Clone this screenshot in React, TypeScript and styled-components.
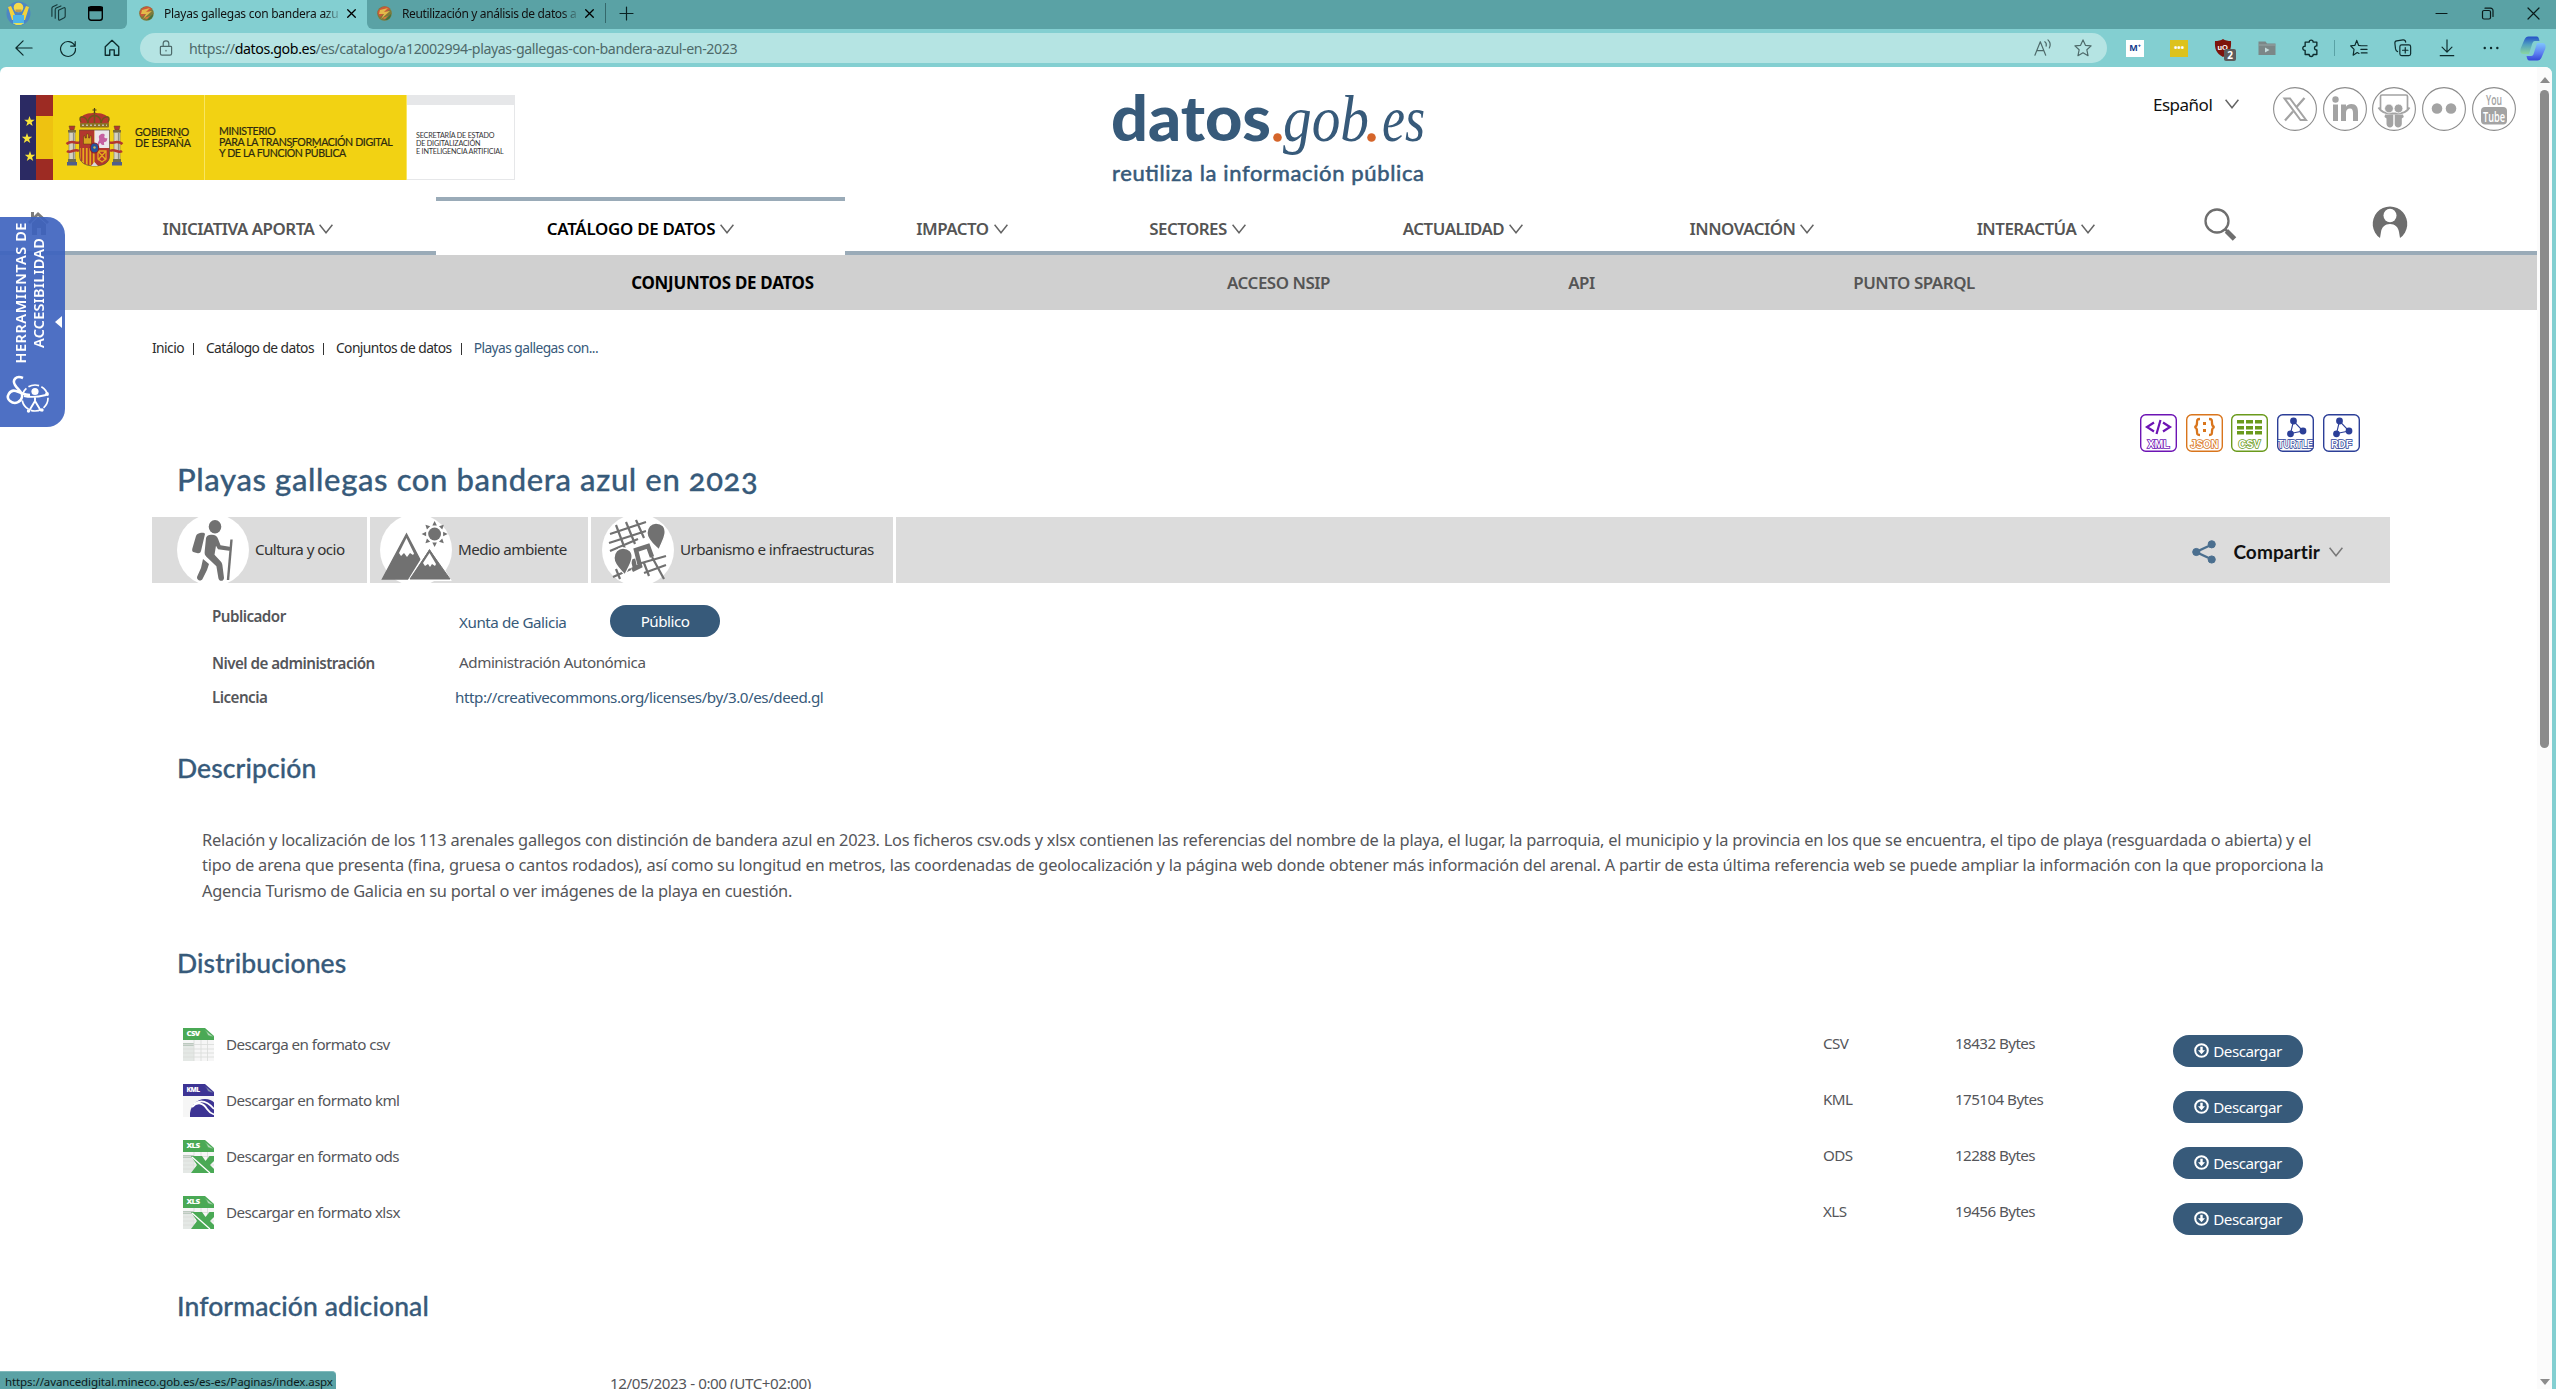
import React from "react";
import styled, { createGlobalStyle } from "styled-components";

const SANS = `"Noto Sans", "Open Sans", sans-serif`;
const GEO = `Lato, "Noto Sans", sans-serif`;
const BLUE = "#375a7a";
const TEAL = "#5aa2a5";
const LINE = "#9aabb8";

const Global = createGlobalStyle`
  * { box-sizing: border-box; }
  html, body { margin: 0; padding: 0; overflow: hidden; background: #83cfd1; }
  svg { display: block; flex: none; overflow: visible; }
`;

const Window = styled.div`
  display: flex;
  flex-direction: column;
  width: 2556px;
  height: 1389px;
  overflow: hidden;
  position: relative;
  background: #83cfd1;
  font-family: ${SANS};
  color: #55565a;
  white-space: nowrap;
`;

/* ---------- browser chrome ---------- */

const TabStrip = styled.div`
  display: flex;
  height: 29px;
  background: ${TEAL};
  color: #111;
  align-items: stretch;
`;

const StripTools = styled.div`
  width: 127px;
  background: ${TEAL};
  border-bottom-right-radius: 6px;
  display: flex;
  align-items: center;
  padding: 0 0 3px 6px;
  gap: 19px;
`;

const TabHolder = styled.div`
  background: #83cfd1;
  display: flex;
  flex: none;
  border-radius: 6px 6px 0 0;
`;

const Tab = styled.div<{ $w: number; $active?: boolean }>`
  width: ${(p) => p.$w}px;
  height: 29px;
  display: flex;
  align-items: center;
  padding: 0 10px 3px ${(p) => (p.$active ? 12 : 10)}px;
  background: ${(p) => (p.$active ? "#83cfd1" : TEAL)};
  border-bottom-left-radius: ${(p) => (p.$active ? 0 : 6)}px;
`;

const TabTitle = styled.span<{ $ls: number }>`
  flex: none;
  width: 174px;
  margin-left: 10px;
  margin-right: 9px;
  font-size: 12px;
  letter-spacing: ${(p) => p.$ls}px;
  mask-image: linear-gradient(to right, #000 92%, rgba(0, 0, 0, 0.25));
`;

const NewTab = styled.div`
  display: flex;
  align-items: center;
  padding-bottom: 3px;
`;

const TabDivider = styled.i`
  width: 1px;
  height: 20px;
  margin: 3px 13px 0 0;
  background: #34686b;
`;

const Spacer = styled.div`
  flex: 1;
`;

const WindowButtons = styled.div`
  display: flex;
  align-items: center;
  gap: 33px;
  padding: 0 16px 3px 0;
`;

const Toolbar = styled.div`
  height: 38px;
  display: flex;
  align-items: center;
  padding: 0 9px 0 15px;
`;

const NavButtons = styled.div`
  display: flex;
  width: 125px;
  gap: 26px;
  align-items: center;
`;

const AddressBar = styled.div`
  width: 1967px;
  height: 30px;
  border-radius: 15px;
  background: #b5e4e3;
  display: flex;
  align-items: center;
  padding: 0 15px 0 18px;
  color: #4e6a6a;
  font-size: 14.2px;
  letter-spacing: -0.4px;
  b { font-weight: 400; color: #000; }
`;

const Url = styled.span`
  margin-left: 15px;
  flex: 1;
`;

const AddressIcons = styled.div`
  display: flex;
  gap: 22px;
`;

const Extensions = styled.div`
  display: flex;
  align-items: center;
  margin-left: 19px;
`;

const IconGroup = styled.div`
  display: flex;
  align-items: center;
  gap: 26px;
`;

const ExtensionTile = styled.div<{ $bg: string; $fg: string }>`
  width: 18px;
  height: 17px;
  background: ${(p) => p.$bg};
  color: ${(p) => p.$fg};
  font: 700 9px/16px ${SANS};
  text-align: center;
`;

const ShieldBox = styled.div`
  position: relative;
  width: 18px;
  height: 18px;
`;

const CountBadge = styled.span`
  position: absolute;
  left: 10px;
  top: 10px;
  width: 12px;
  height: 12px;
  border-radius: 2px;
  background: #5c5c5c;
  color: #fff;
  font: 700 10px/12px ${SANS};
  text-align: center;
`;

const ToolDivider = styled.i`
  width: 1px;
  height: 16px;
  margin: 0 15px 0 14px;
  background: #5aa2a5;
`;

const CopilotSlot = styled.div`
  margin-left: 20px;
`;

/* ---------- page ---------- */

const Viewport = styled.div`
  display: flex;
  width: 2552px;
  height: 1322px;
  background: #fff;
  border-radius: 6px 7px 0 0;
  overflow: hidden;
`;

const Page = styled.div`
  width: 2537px;
  height: 1322px;
  overflow: hidden;
`;

const ScrollTrack = styled.div`
  width: 15px;
  background: #fbfbfb;
  display: flex;
  flex-direction: column;
  align-items: center;
  padding: 10px 0 4px;
`;

const ScrollThumb = styled.div`
  width: 9px;
  height: 658px;
  margin: 7px 0 auto;
  border-radius: 5px;
  background: #8b8b8b;
`;

const Header = styled.header`
  height: 130px;
  display: flex;
  align-items: flex-start;
  padding-left: 20px;
`;

const GovBanner = styled.div`
  display: flex;
  width: 495px;
  height: 85px;
  margin-top: 28px;
  font-family: ${GEO};
  color: #2d2a10;
`;

const GovYellow = styled.div<{ $w: number; $pad: number }>`
  width: ${(p) => p.$w}px;
  background: #f2d213;
  border-right: 1px solid #f8e560;
  display: flex;
  align-items: center;
  padding-left: ${(p) => p.$pad}px;
  gap: 13px;
`;

const GovText = styled.div<{ $ls: number; $top: number }>`
  font-size: 10.6px;
  line-height: 11px;
  letter-spacing: ${(p) => p.$ls}px;
  -webkit-text-stroke: 0.2px #2d2a10;
  padding-top: ${(p) => p.$top}px;
`;

const GovOffice = styled.div`
  width: 108px;
  border: 1px solid #e6e7e9;
  border-left: 0;
  border-top: 10px solid #e6e7e9;
  padding: 27px 0 0 9px;
  font-size: 7.2px;
  line-height: 8px;
  letter-spacing: -0.2px;
  color: #333;
`;

const Brand = styled.div`
  margin: 15px 0 0 594px;
`;

const Language = styled.div`
  margin: 23px 0 0 724px;
  height: 28px;
  display: flex;
  align-items: center;
  gap: 13px;
  font-size: 17px;
  letter-spacing: -0.5px;
  color: #111;
  width: 120px;
`;

const Social = styled.div`
  display: flex;
  gap: 5.7px;
  margin-top: 20px;
`;

const NavBar = styled.nav`
  display: flex;
  height: 58px;
`;

const NavItem = styled.a<{ $w: number; $active?: boolean; $padLeft?: number }>`
  width: ${(p) => p.$w}px;
  height: 58px;
  flex: none;
  display: flex;
  align-items: center;
  justify-content: center;
  gap: 5px;
  padding: 5px 0 0 ${(p) => p.$padLeft || 0}px;
  border-top: 4px solid ${(p) => (p.$active ? LINE : "transparent")};
  border-bottom: 4px solid ${(p) => (p.$active ? "transparent" : LINE)};
  font-size: 16.9px;
  font-weight: 600;
  letter-spacing: ${(p) => (p.$active ? -0.28 : -0.5)}px;
  color: ${(p) => (p.$active ? "#000" : "#555")};
`;

const NavIcon = styled.span<{ $w: number; $lift: number }>`
  width: ${(p) => p.$w}px;
  height: 58px;
  display: flex;
  align-items: center;
  justify-content: center;
  border-bottom: 4px solid ${LINE};
  padding-bottom: ${(p) => p.$lift}px;
`;

const NavRest = styled.span`
  flex: 1;
  border-bottom: 4px solid ${LINE};
`;

const SubNav = styled.nav`
  display: flex;
  height: 55px;
  background: #d0d0d0;
  padding-left: 436px;
`;

const SubItem = styled.a<{ $w: number; $active?: boolean }>`
  width: ${(p) => p.$w}px;
  display: flex;
  align-items: center;
  justify-content: center;
  font-size: 16.9px;
  font-weight: ${(p) => (p.$active ? 700 : 600)};
  letter-spacing: ${(p) => (p.$active ? -0.25 : -0.45)}px;
  color: ${(p) => (p.$active ? "#000" : "#555")};
`;

const Crumbs = styled.div`
  display: flex;
  align-items: center;
  height: 75px;
  padding-left: 152px;
  font-size: 13.8px;
  letter-spacing: -0.56px;
  color: #2b2b2b;
`;

const CrumbBar = styled.i`
  width: 1px;
  height: 12px;
  margin: 2px 11.5px 0 9.5px;
  background: #333;
`;

const CrumbCurrent = styled.span`
  color: ${BLUE};
`;

const Formats = styled.div`
  display: flex;
  gap: 8.8px;
  margin: 29px 177px 0 0;
  justify-content: flex-end;
`;

const Title = styled.h1`
  margin: 0 0 11px 177px;
  height: 54px;
  font: 500 31px/54px ${GEO};
  letter-spacing: 0.63px;
  color: ${BLUE};
  -webkit-text-stroke: 0.3px ${BLUE};
  font-variant-numeric: oldstyle-nums;
`;

const TopicBar = styled.div`
  display: flex;
  width: 2238px;
  height: 66px;
  margin-left: 152px;
  background: #dcdcdc;
  overflow: hidden;
`;

const Topic = styled.div<{ $w: number; $pad: number }>`
  width: ${(p) => p.$w}px;
  padding-left: ${(p) => p.$pad}px;
  border-right: 3px solid #fff;
  display: flex;
  align-items: center;
  gap: 6px;
  font-size: 15.2px;
  letter-spacing: -0.57px;
  color: #333;
`;

const TopicName = styled.span`
  padding-bottom: 2px;
`;

const TopicDisc = styled.span`
  width: 72px;
  height: 72px;
  flex: none;
  border-radius: 50%;
  background: #fff;
  display: flex;
  align-items: center;
  justify-content: center;
`;

const Share = styled.div`
  margin-left: auto;
  padding: 3px 47px 0 0;
  display: flex;
  align-items: center;
  font: 700 19px/24px ${GEO};
  letter-spacing: 0.1px;
  color: #111;
  span { margin: 0 9px 0 17px; }
`;

const Meta = styled.div`
  margin: 17px 0 0 212px;
  font-size: 15.2px;
`;

const MetaRow = styled.div<{ $h: number }>`
  display: flex;
  align-items: center;
  height: ${(p) => p.$h}px;
`;

const MetaLabel = styled.span<{ $w?: number; $up?: number }>`
  width: ${(p) => p.$w || 247}px;
  padding-bottom: ${(p) => p.$up || 0}px;
  font-weight: 600;
  letter-spacing: -0.54px;
`;

const MetaValue = styled.span<{ $link?: boolean; $w?: number; $down?: number; $up?: number }>`
  width: ${(p) => (p.$w ? p.$w + "px" : "auto")};
  padding: ${(p) => p.$down || 0}px 0 ${(p) => p.$up || 0}px;
  letter-spacing: -0.45px;
  color: ${(p) => (p.$link ? BLUE : "#55565a")};
`;

const Pill = styled.span<{ $w: number }>`
  width: ${(p) => p.$w}px;
  height: 32px;
  border-radius: 16px;
  background: ${BLUE};
  color: #fff;
  display: flex;
  align-items: center;
  justify-content: center;
  gap: 4px;
  padding-bottom: 1px;
  font-size: 15.2px;
  letter-spacing: -0.5px;
`;

const Heading = styled.h2<{ $top: number }>`
  margin: ${(p) => p.$top}px 0 0 177px;
  height: 40px;
  font: 500 26.5px/40px ${GEO};
  letter-spacing: 0.1px;
  color: ${BLUE};
  -webkit-text-stroke: 0.3px ${BLUE};
`;

const Paragraph = styled.p`
  margin: 39px 0 0 202px;
  font-size: 16.4px;
  line-height: 25.4px;
  letter-spacing: -0.245px;
  span { display: block; }
`;

const Files = styled.div`
  margin: 33px 0 0 183px;
`;

const FileRow = styled.div`
  display: grid;
  grid-template-columns: 43px 1597px 132px 218px 130px;
  align-items: center;
  height: 56px;
  font-size: 15.2px;
  letter-spacing: -0.57px;
`;

const FileCell = styled.span`
  padding-bottom: 2px;
`;

const FileAction = styled.span`
  padding-top: 14px;
`;

const DateLine = styled.div`
  margin: 45px 0 0 610px;
  font-size: 15.2px;
  line-height: 24px;
  letter-spacing: -0.42px;
`;

/* ---------- overlays ---------- */

const Status = styled.div`
  position: absolute;
  left: 0;
  bottom: 0;
  width: 336px;
  height: 18px;
  border-top-right-radius: 4px;
  background: ${TEAL};
  border-top: 1px solid #7fb9bb;
  padding-left: 5px;
  font-size: 11.5px;
  line-height: 19px;
  letter-spacing: -0.1px;
  color: #0c1a1a;
`;

const Access = styled.aside`
  position: absolute;
  left: 0;
  top: 217px;
  width: 65px;
  height: 210px;
  border-radius: 0 18px 18px 0;
  background: rgba(60, 98, 190, 0.91);
  color: #fff;
  display: flex;
  flex-direction: column;
`;

const AccessText = styled.div`
  height: 152px;
  display: flex;
  padding: 0 0 0 11px;
  align-items: center;
`;

const AccessWord = styled.span<{ $ls: number }>`
  writing-mode: vertical-rl;
  transform: rotate(180deg);
  font-size: 14.5px;
  font-weight: 600;
  line-height: 18px;
  width: 18px;
  letter-spacing: ${(p) => p.$ls}px;
`;

const AccessArrow = styled.i`
  position: absolute;
  left: 55px;
  top: 99px;
  border: 6px solid transparent;
  border-left: 0;
  border-right: 7px solid #fff;
`;

const HomeBehind = styled.div`
  position: absolute;
  left: 28px;
  top: 211px;
`;

/* ---------- drawings ---------- */

const Line = ({ d, size = 20, color = "#0d2b2c", w = 1.3, box = 20, fill = "none" }: {
  d: string; size?: number; color?: string; w?: number; box?: number; fill?: string;
}) => (
  <svg width={size} height={size} viewBox={`0 0 ${box} ${box}`} fill={fill} stroke={color} strokeWidth={w} strokeLinecap="round" strokeLinejoin="round">
    <path d={d} />
  </svg>
);

const Chevron = ({ color = "#666" }: { color?: string }) => (
  <svg width="14" height="10" viewBox="0 0 14 10" fill="none" stroke={color} strokeWidth="1.5">
    <path d="M.6.8 7 8.8 13.4.8" />
  </svg>
);

const Avatar = () => (
  <svg width="25" height="25" viewBox="0 0 25 25">
    <circle cx="12.5" cy="12.5" r="12" fill="#4e86c4" />
    <path d="M2 6l3-1 4 9h7l4-9 3 1-4 13H6z" fill="#f3d23c" />
    <circle cx="12.5" cy="6.5" r="4.8" fill="#f6da4b" />
    <path d="M9.5 8.5h6v2.5h-6z" fill="#b99a52" />
    <path d="M7 14h11v9H7z" fill="#4fb4e8" />
    <path d="M7 22h11l-3 2h-5z" fill="#e8e055" />
  </svg>
);

const Favicon = () => (
  <svg width="15" height="15" viewBox="0 0 15 15">
    <circle cx="7.5" cy="7.5" r="7.3" fill="#7d7a3a" />
    <path d="M1 5C4 0 10-1 13 3L3 11C1 9 0 7 1 5z" fill="#c9593a" />
    <path d="M3 4l8-2-4 4 6-1-9 8 3-5H2z" fill="#e3b94a" />
    <path d="M8 14l6-6c0 4-3 6-6 6z" fill="#3f7340" />
    <path d="M5 12l6-2-3 3z" fill="#e0793a" />
  </svg>
);

const Copilot = () => (
  <svg width="26" height="25" viewBox="0 0 26 25">
    <defs>
      <linearGradient id="cpA" x1="0" y1="0" x2="0" y2="1"><stop stopColor="#2450c8" /><stop offset=".45" stopColor="#4f9fc0" /><stop offset="1" stopColor="#8ad6a0" /></linearGradient>
      <linearGradient id="cpB" x1="0" y1="0" x2="0" y2="1"><stop stopColor="#7fc4ff" /><stop offset=".6" stopColor="#5b7cf0" /><stop offset="1" stopColor="#3546d8" /></linearGradient>
    </defs>
    <path d="M8.500.5h8c2 0 2.500 2 3 4.500L15 5c-2 0-2.800 2-3.500 5L9 18H3.500C0 18 0 15 .8 12L4.500 3.500c1-2 2-3 4-3z" fill="url(#cpA)" />
    <path d="M17.500 24.500h-8c-2 0-2.500-2-3-4.500l4.500 0c2 0 2.800-2 3.500-5L17 7h5.500c3.500 0 3.500 3 2.700 6l-3.700 8.500c-1 2-2 3-4 3z" fill="url(#cpB)" />
  </svg>
);

const star = (cx: number, cy: number, r: number) => {
  const pts: string[] = [];
  for (let i = 0; i < 10; i++) {
    const a = -Math.PI / 2 + (i * Math.PI) / 5;
    const q = i % 2 ? r * 0.4 : r;
    pts.push(`${(cx + q * Math.cos(a)).toFixed(2)},${(cy + q * Math.sin(a)).toFixed(2)}`);
  }
  return pts.join(" ");
};

const FlagStripes = () => (
  <svg width="33" height="85" viewBox="0 0 33 85">
    <rect width="16" height="85" fill="#2b2a63" />
    <rect x="16" width="17" height="85" fill="#9d2b23" />
    <rect x="16" y="21" width="17" height="43" fill="#eec211" />
    <g fill="#f6e23a">
      <polygon points={star(9.5, 26.5, 5.5)} />
      <polygon points={star(7, 43.5, 5.5)} />
      <polygon points={star(10, 61.5, 5.5)} />
    </g>
  </svg>
);

const Pillar = ({ x }: { x: number }) => (
  <g transform={`translate(${x} 0)`}>
    <path d="M2 18h6l-1 4H3z" fill="#b3372e" stroke="#5c4a22" strokeWidth=".5" />
    <rect x="1" y="22" width="8" height="2.5" fill="#7b6a3a" />
    <rect x="2" y="24.5" width="6" height="27" fill="#d6d2bf" stroke="#777" strokeWidth=".6" />
    <path d="M6.500 25v26" stroke="#8d8d84" strokeWidth="1.2" />
    <rect x="1" y="51" width="8" height="3" fill="#6f6d4b" />
    <rect x="0" y="54" width="10" height="3.5" fill="#4f5f8a" />
  </g>
);

const CoatOfArms = () => (
  <svg width="55" height="60" viewBox="0 0 55 60">
    <Pillar x={0} />
    <Pillar x={45} />
    <path d="M-.5 36c6-5 10 1 14-2M0 43c4 3 7-3 12 0M55.500 36c-6-5-10 1-14-2M55 43c-4 3-7-3-12 0" fill="none" stroke="#b3372e" strokeWidth="2.6" />
    <path d="M14 17C10 8 18 5 27.500 5S45 8 41 17z" fill="#b3372e" />
    <path d="M14 14C10 7 19 7 21 15M41 14C45 7 36 7 34 15M27.500 4v11M21 15c0-10 13-10 13 0" fill="none" stroke="#6e561a" strokeWidth="1.5" />
    <path d="M27.500 0v5M25.500 2h4" stroke="#4a3c18" strokeWidth="1.2" />
    <rect x="13" y="15" width="29" height="4.5" rx="1" fill="#8a6f22" />
    <path d="M15 17.200h25" stroke="#d8e0f0" strokeWidth="1" strokeDasharray="2 2" />
    <path d="M12.500 22h15v18h-15z" fill="#b3372e" />
    <path d="M27.500 22h15v18h-15z" fill="#ece6ea" />
    <path d="M12.500 40h15v18C17 58 12.500 54 12.500 48z" fill="#e5a91c" />
    <path d="M27.500 40h15v8c0 6-4.500 10-15 10z" fill="#b3372e" />
    <path d="M14.500 40v13M18 40v16M21.500 40v17M25 40v18" stroke="#b3372e" strokeWidth="1.7" />
    <path d="M16.500 36v-8h1.500v2h1.500v-4h2v4H23v-2h1.500v8z" fill="#d9a51f" stroke="#5c3a10" strokeWidth=".5" />
    <path d="M31 37c-1-3 2-4 1-7s3-5 5-4-1 3 1 4 3-1 2 2-3 1-3 3 1 2-1 2-2-2-3-2 0 2-2 2z" fill="#c560a0" />
    <path d="M31 43h8v8l-4 3-4-3zM31 43l8 9M39 43l-8 9" fill="none" stroke="#e5a91c" strokeWidth="1.3" />
    <ellipse cx="27.5" cy="40" rx="4.2" ry="5" fill="#23539b" stroke="#8e1f2b" strokeWidth="1.2" />
    <circle cx="27.5" cy="39.5" r="1.2" fill="#cbb45c" />
    <path d="M12.500 22h30v26c0 6-5 10-15 10s-15-4-15-10z" fill="none" stroke="#5c4a3a" strokeWidth=".7" />
    <path d="M24 58l3.500-4 3.500 4z" fill="#d9d9d9" />
  </svg>
);

const BrandLogo = () => (
  <svg width="320" height="112" viewBox="0 0 320 112" fill={BLUE}>
    <text x="2" y="59" fontFamily="Lato, sans-serif" fontWeight="900" fontSize="62" textLength="160" lengthAdjust="spacingAndGlyphs">datos</text>
    <circle cx="168.500" cy="55.500" r="4.300" fill="#d5652a" />
    <text x="174" y="59" fontFamily="'Liberation Serif', serif" fontStyle="italic" fontSize="66" textLength="86" lengthAdjust="spacingAndGlyphs">gob</text>
    <circle cx="262.500" cy="55.500" r="4.300" fill="#d5652a" />
    <text x="273" y="59" fontFamily="'Liberation Serif', serif" fontStyle="italic" fontSize="66" textLength="43" lengthAdjust="spacingAndGlyphs">es</text>
    <text x="3" y="99" fontFamily="Lato, sans-serif" fontWeight="400" fontSize="22" textLength="312" stroke={BLUE} strokeWidth=".55">reutiliza la información pública</text>
  </svg>
);

const Disc = ({ children }: { children: React.ReactNode }) => (
  <svg width="44" height="44" viewBox="0 0 44 44">
    <circle cx="22" cy="22" r="21.4" fill="#fff" stroke="#8c8c8c" strokeWidth="1.1" />
    {children}
  </svg>
);

const G = "#a3a3a3";
const SocialIcons = () => (
  <Social>
    <Disc>
      <path d="M11.500 11.500h5.500L33 33h-5.500z" fill="#fff" stroke={G} strokeWidth="2" />
      <path d="M31.500 11 23.500 20M20 24.500 12 33.500" stroke={G} strokeWidth="2.3" />
    </Disc>
    <Disc>
      <g fill={G}>
        <circle cx="12.5" cy="12.5" r="3.2" />
        <path d="M10 17.500h5V34h-5zM18 17.500h5v2.300c1-1.800 3-2.800 5.300-2.800 5 0 6.700 3 6.700 8v9h-5v-8c0-2.700-.7-4.500-3-4.500-2.700 0-4 1.700-4 4.500v8h-5z" />
      </g>
    </Disc>
    <Disc>
      <path d="M8.500 22V9.500c0-1 .5-1.500 1.500-1.500h24c1 0 1.500.5 1.500 1.500V22" fill="none" stroke={G} strokeWidth="1.7" />
      <path d="M6.500 20.500c3 5 7 6 12 6h7c5 0 9-1 12-6" fill="none" stroke={G} strokeWidth="2" />
      <circle cx="17" cy="21.5" r="4.4" fill={G} stroke="#fff" strokeWidth=".8" />
      <circle cx="26.5" cy="21.5" r="4.4" fill={G} stroke="#fff" strokeWidth=".8" />
      <path d="M13 27.500h8.300V37c0 4.500-6.500 4.500-6.800 0V31.500L12.500 30zM22.700 27.500H31l.8 2.500-2 1.500V37c-.3 4.500-7.100 4.500-7.100 0z" fill={G} />
    </Disc>
    <Disc>
      <circle cx="15" cy="21.5" r="5.3" fill={G} /><circle cx="29" cy="21.5" r="5.3" fill={G} />
    </Disc>
    <Disc>
      <text x="14" y="18" fontFamily="'Open Sans', sans-serif" fontSize="15" fontWeight="600" fill={G} textLength="16" lengthAdjust="spacingAndGlyphs">You</text>
      <rect x="9" y="20" width="26" height="17.5" rx="4" fill={G} />
      <text x="11" y="34.500" fontFamily="'Open Sans', sans-serif" fontSize="15" fontWeight="600" fill="#fff" textLength="22" lengthAdjust="spacingAndGlyphs">Tube</text>
    </Disc>
  </Social>
);

const FORMATS: { name: string; color: string; w: number }[] = [
  { name: "XML", color: "#6d14b4", w: 22 },
  { name: "JSON", color: "#d9751c", w: 28 },
  { name: "CSV", color: "#6a9a1c", w: 22 },
  { name: "TURTLE", color: "#2c3f98", w: 35 },
  { name: "RDF", color: "#2c3f98", w: 21 },
];

const FormatIcon = ({ name, color, w }: { name: string; color: string; w: number }) => (
  <svg width="37" height="38" viewBox="0 0 37 38">
    <rect x=".7" y=".7" width="35.6" height="36.6" rx="5" fill="#fff" stroke={color} strokeWidth="1.4" />
    {name === "XML" && <path d="M14 8.500l-7 4.500 7 4.500M23 8.500l7 4.500-7 4.500M20.500 6l-4 14" fill="none" stroke={color} strokeWidth="2.2" />}
    {name === "JSON" && (
      <>
        <path d="M14 5c-3 0-3 1-3 4 0 2-.5 3.500-2.500 4 2 .5 2.500 2 2.500 4 0 3 0 4 3 4M23 5c3 0 3 1 3 4 0 2 .5 3.500 2.500 4-2 .5-2.500 2-2.500 4 0 3 0 4-3 4" fill="none" stroke={color} strokeWidth="2.3" />
        <path d="M17 8h3v3h-3zM17 15h3v3h-3z" fill={color} />
      </>
    )}
    {name === "CSV" && [6, 12, 17].map((y) => [6, 15, 24].map((x) => <rect key={x + "-" + y} x={x} y={y} width="7" height="3.5" fill={color} />))}
    {(name === "RDF" || name === "TURTLE") && (
      <>
        <path d="M16.500 7 13.500 19.500 26 17z" fill="none" stroke={color} strokeWidth="1.1" />
        <circle cx="16.5" cy="7" r="3.4" fill={color} /><circle cx="13.5" cy="19.8" r="3.4" fill={color} /><circle cx="26" cy="17" r="3.4" fill={color} />
      </>
    )}
    <text x={18.5 - w / 2} y="33.500" fontFamily="'Liberation Sans', sans-serif" fontWeight="700" fontSize="10.5" fill="#fff" stroke={color} strokeWidth="1.6" paintOrder="stroke" textLength={w} lengthAdjust="spacingAndGlyphs">{name}</text>
  </svg>
);

const D = "#717171";
const Hiker = () => (
  <svg width="72" height="66" viewBox="0 0 72 66" fill={D}>
    <ellipse cx="38" cy="9.7" rx="6.3" ry="6.7" />
    <path d="M23 16c2-.6 5-.3 5 1l-4 17c-.5 2-2 2.500-4 2l-3-.7c-2-.5-2-2-1.700-3.500L19 19c.8-2 2-2.500 4-3z" />
    <path d="M29 21c1-3 3-3.500 6-3.300 3 .2 5 1 6 4l2.500 6.500 9 1.500c2.500 1 2 4-.5 4l-11-1.500-2-3.500-1.500 9 6.500 7c1 1 1.500 3 1.600 5l1.400 11c.2 4-5 4-5.600.5l-2-12-10-9.500c-1.500-1.500-2-3-1.700-5.500z" />
    <path d="M26 42l6 5-2 6-4.500 9c-1.600 3-6.500 1-5.300-2.500L24 51z" />
    <path d="M54.500 22.500 51 63" stroke={D} strokeWidth="2.4" />
  </svg>
);

const Mountains = () => (
  <svg width="72" height="66" viewBox="0 0 72 66">
    <path d="M2.500 62 26.500 17 50 62z" fill={D} stroke={D} strokeWidth="1.5" />
    <path d="M26.500 21 19 36l2 3 3-3 3 4 3-4 3 2 1-1.500z" fill="#fff" />
    <path d="M29 63 49.500 30 70 63z" fill={D} stroke="#fff" strokeWidth="2" />
    <path d="M30 62 49.500 33 70 62z" fill={D} stroke={D} />
    <path d="M49.500 36 43 46l2 3 3-2 2 3 2-3 3 2 1-2z" fill="#fff" />
    <circle cx="54.6" cy="17" r="6.4" fill={D} />
    {Array.from({ length: 8 }, (_, i) => (
      <path key={i} d="M52.300 8.500 54.600 4l2.300 4.500z" fill={D} transform={`rotate(${i * 45} 54.6 17)`} />
    ))}
  </svg>
);

const CityMap = () => (
  <svg width="72" height="66" viewBox="0 0 72 66" fill={D}>
    <g stroke={D} strokeWidth="2.2" fill="none">
      <path d="M8 17 44 5M7 26 44 14M8 34l28-12M14 8l9 24M24 5l9 22M34 3l8 18" />
      <path d="M36 47l28-8M42 56l22-8M11 60l18-8M50 40l12 22M42 46l5 13M14 52l4 10" />
    </g>
    <path d="M33 51l-2-9M30 53l8-4-4-16 12-4 4 11" fill="none" stroke={D} strokeWidth="4.5" />
    <path d="M54 6c6 0 10 4 9 11-1 6-4 10-6 16-5-5-12-10-12-17 0-6 4-10 9-10z" stroke="#fff" strokeWidth="1.3" />
    <path d="M21 31c6 0 10 4 9 10-1 7-5 11-7 17-5-6-11-10-11-17 0-6 4-10 9-10z" stroke="#fff" strokeWidth="1.3" />
  </svg>
);

const ShareIcon = () => (
  <svg width="24" height="24" viewBox="0 0 24 24" fill="#4b6f8f" stroke="#4b6f8f">
    <path d="M20 4.500 4 12l16 7.500" fill="none" strokeWidth="2.4" />
    <circle cx="4.3" cy="12" r="3.6" /><circle cx="19.7" cy="4.3" r="3.6" /><circle cx="19.7" cy="19.5" r="3.6" />
  </svg>
);

const DownloadIcon = () => (
  <svg width="15" height="15" viewBox="0 0 15 15">
    <circle cx="7.5" cy="7.5" r="6.3" fill="none" stroke="#fff" strokeWidth="2" />
    <path d="M6.300 3.800h2.400v3.400h2.300L7.500 11.300 4 7.200h2.300z" fill="#fff" />
  </svg>
);

const FileIcon = ({ label }: { label: string }) => {
  const c = label === "KML" ? "#3d3494" : "#4aa955";
  return (
    <svg width="31" height="33" viewBox="0 0 31 33">
      <path d="M0 1h22l9 8v24H0z" fill="#f6f6f6" />
      {label !== "KML" && (
        <>
          <path d="M0 15h11v3H0z" fill="#bccabf" />
          <path d="M0 18h11v15H0z" fill="#e4e8e5" />
          <path d="M0 16.500h31M0 21h31M0 25h31M0 29h31M11 12v21M18 12v21M24.500 12v21" stroke="#d9dcd9" strokeWidth=".8" />
        </>
      )}
      <path d="M0 0h22l9 8v4H0z" fill={c} />
      <path d="M20 .5c3 2 4 5 5 7l6 1.500z" fill="#b8d8bc" stroke={c} strokeWidth=".6" opacity={label === "KML" ? 0.6 : 1} />
      <text x="3.500" y="8.300" fontFamily="'Open Sans', sans-serif" fontWeight="800" fontSize="6.6" fill="#fff" textLength="13" lengthAdjust="spacingAndGlyphs">{label}</text>
      {label === "XLS" && (
        <>
          <path d="M8 16h11l3.500 5 4-5H31v5l-4 4 4 4v4H8l6-8z" fill={c} />
          <path d="M9 17 27 33" stroke="#fff" strokeWidth="1.3" />
        </>
      )}
      {label === "KML" && (
        <>
          <path d="M7 33C6 22 14 15 22 15c4 0 7 1.500 9 3.500V33z" fill={c} />
          <path d="M9 23c6-6 11-4 15 2 2 3 4 4.500 7 5.500M11 20c7-5 14-2 20 5" fill="none" stroke="#fff" strokeWidth="1.8" />
        </>
      )}
    </svg>
  );
};

const AccessIcon = () => (
  <svg width="44" height="38" viewBox="0 0 44 38" fill="none" stroke="#fff">
    <path d="M17 2C10-1 6 4 9 9c3 5 8 7 7 12s-7 8-12 4 0-12 6-10 9 4 14 4" strokeWidth="2.5" />
    <circle cx="29" cy="22" r="13" strokeWidth="1.7" strokeDasharray="11 2.5" />
    <circle cx="29" cy="15.5" r="3.6" fill="#fff" stroke="none" />
    <path d="M18 20c8 2 14 1 22-1M29 20v5l-6 10M29 25l6 10" strokeWidth="1.9" />
    <g fill="#fff" stroke="none"><circle cx="41" cy="18" r="1.9" /><circle cx="22.5" cy="35" r="1.7" /><circle cx="36" cy="34" r="1.7" /></g>
  </svg>
);

/* ---------- data ---------- */

const NAV: { label: string; w: number; active?: boolean; pad?: number }[] = [
  { label: "INICIATIVA APORTA", w: 436, pad: 60 },
  { label: "CATÁLOGO DE DATOS", w: 409, active: true },
  { label: "IMPACTO", w: 234 },
  { label: "SECTORES", w: 237 },
  { label: "ACTUALIDAD", w: 294 },
  { label: "INNOVACIÓN", w: 284 },
  { label: "INTERACTÚA", w: 284 },
];

const FILES = [
  { icon: "CSV", title: "Descarga en formato csv", format: "CSV", size: "18432 Bytes" },
  { icon: "KML", title: "Descargar en formato kml", format: "KML", size: "175104 Bytes" },
  { icon: "XLS", title: "Descargar en formato ods", format: "ODS", size: "12288 Bytes" },
  { icon: "XLS", title: "Descargar en formato xlsx", format: "XLS", size: "19456 Bytes" },
];

/* ---------- app ---------- */

const CLOSE = "M.7.7l7.600 7.600M8.300.7.700 8.300";

const Chrome = () => (
  <>
    <TabStrip>
      <TabHolder>
        <StripTools>
          <Avatar />
          <Line size={19} d="M9 6.500 14.500 4a1 1 0 011.500 1v8a2 2 0 01-1 1.500l-5 2.500a1 1 0 01-1-1zM5.500 15V6a2 2 0 011-1.700L11.500 2M2 13V4.500A2 2 0 013 3L7.500.8" w={1.2} color="#16393a" />
          <svg width="15" height="15" viewBox="0 0 15 15" fill="none" stroke="#000" strokeWidth="1.4">
            <rect x=".7" y=".7" width="13.6" height="13.6" rx="2.5" /><path d="M.7 1.500h13.600v3H.7z" fill="#000" />
          </svg>
        </StripTools>
        <Tab $w={240} $active>
          <Favicon />
          <TabTitle $ls={-0.26}>Playas gallegas con bandera azul</TabTitle>
          <Line size={9} box={9} d={CLOSE} color="#000" />
        </Tab>
        <Tab $w={238}>
          <Favicon />
          <TabTitle $ls={-0.36}>Reutilización y análisis de datos a</TabTitle>
          <Line size={9} box={9} d={CLOSE} color="#000" />
        </Tab>
      </TabHolder>
      <TabDivider />
      <NewTab>
        <Line size={15} box={15} d="M7.500 1v13M1 7.500h13" color="#0a2223" w={1.2} />
      </NewTab>
      <Spacer />
      <WindowButtons>
        <Line size={13} box={13} d="M1 6.500h11" color="#0a1a1a" w={1.2} />
        <Line size={13} box={13} d="M3 3.500h5a1.500 1.500 0 011.500 1.500v5.500A1.500 1.500 0 018 12H3a1.500 1.500 0 01-1.500-1.500V5A1.500 1.500 0 013 3.500zM4 1.200h5.500a2.500 2.500 0 012.500 2.500V9.500" color="#0a1a1a" w={1.2} />
        <Line size={13} box={13} d="M1 1l11 11M12 1 1 12" color="#0a1a1a" w={1.2} />
      </WindowButtons>
    </TabStrip>
    <Toolbar>
      <NavButtons>
        <Line size={18} d="M19 10H1M9 2 1 10l8 8" />
        <Line size={18} d="M18 3v5h-5M17.500 7.500A8.300 8.300 0 1018.300 10.500" />
        <Line size={18} d="M2.500 8.500 10 1.500l7.500 7v9.500h-5v-6h-5v6h-5z" w={1.5} />
      </NavButtons>
      <AddressBar>
        <Line size={16} d="M4 8h12a1 1 0 011 1v8a2 2 0 01-2 2H5a2 2 0 01-2-2V9a1 1 0 011-1zM6.500 8V4.500a3.500 3.500 0 017 0V8M10 13v.6" color="#4e6a6a" w={1.5} />
        <Url>https://<b>datos.gob.es</b>/es/catalogo/a12002994-playas-gallegas-con-bandera-azul-en-2023</Url>
        <AddressIcons>
          <Line size={18} d="M1 18 7 3l6 15M3 13h8M12 3c1.500 1 2 3 1.500 5M15.500 1c2.500 2.500 3 6 1.500 9" color="#4e6a6a" />
          <Line size={18} d="M10 1l2.700 6 6.300.7-4.700 4.300 1.300 6.500L10 15.300 4.400 18.500 5.700 12 1 7.700 7.300 7z" color="#4e6a6a" />
        </AddressIcons>
      </AddressBar>
      <Extensions>
        <IconGroup>
          <ExtensionTile $bg="#fff" $fg="#123a8c">M⁺</ExtensionTile>
          <ExtensionTile $bg="#ddc21c" $fg="#fff">•••</ExtensionTile>
          <ShieldBox>
            <svg width="18" height="18" viewBox="0 0 18 18">
              <path d="M9 0c2 1.500 5 2 8 2 .5 8-1 12-8 16C2 14 .5 10 1 2c3 0 6-.5 8-2z" fill="#7d130c" />
              <text x="3.500" y="10.500" fontFamily="'Liberation Sans', sans-serif" fontSize="7.5" fontWeight="700" fill="#fff">uO</text>
            </svg>
            <CountBadge>2</CountBadge>
          </ShieldBox>
          <svg width="18" height="16" viewBox="0 0 18 16">
            <path d="M.5 1.500h7l1.500 2h8.500V15H.5z" fill="#7b8787" /><path d="M.5 5h17" stroke="#98a5a5" /><path d="M7 7.500l4.500 2.500L7 12.500z" fill="#c5dcdc" />
          </svg>
          <Line size={18} d="M8 3.500a2.200 2.200 0 014.400 0h4.100v4.200M3.500 8V3.500H8M16.500 7.700c-3.500-.5-3.500 5 0 4.500v5H12.400a2.200 2.200 0 01-4.400 0H3.500v-4.500M3.500 8c-3.500-.5-3.500 5 0 4.700" w={1.5} />
        </IconGroup>
        <ToolDivider />
        <IconGroup>
          <Line size={18} d="M12.500 7.500 9.500 7 7.500 1.500 5.500 7 .7 7.500l3.800 4L3.500 18l4.500-3 2 1M12.500 7.500H19M12 11.500h7M12.500 15.500H19" />
          <Line size={18} d="M8.500 6.500h8a2 2 0 012 2v8a2 2 0 01-2 2h-8a2 2 0 01-2-2v-8a2 2 0 012-2zM12.500 9.500v6M9.500 12.500h6M4 14c-1.500-.5-2-1.300-2.300-3L1 5C.8 3.300 1.500 2.200 3 2l7-1c1.700-.2 2.700.5 3 2.500" />
          <Line size={18} d="M10 1v13M4.500 9 10 14.500 15.500 9M2.500 18.500h15" />
          <Line size={18} d="M3 10h.1M10 10h.1M17 10h.1" w={2.6} />
        </IconGroup>
        <CopilotSlot><Copilot /></CopilotSlot>
      </Extensions>
    </Toolbar>
  </>
);

export default function App() {
  return (
    <Window>
      <Global />
      <Chrome />
      <Viewport>
        <Page>
          <Header>
            <GovBanner>
              <FlagStripes />
              <GovYellow $w={152} $pad={14}>
                <CoatOfArms />
                <GovText $ls={-0.15} $top={1}>GOBIERNO<br />DE ESPAÑA</GovText>
              </GovYellow>
              <GovYellow $w={202} $pad={14}>
                <GovText $ls={-0.38} $top={10}>MINISTERIO<br />PARA LA TRANSFORMACIÓN DIGITAL<br />Y DE LA FUNCIÓN PÚBLICA</GovText>
              </GovYellow>
              <GovOffice>SECRETARÍA DE ESTADO<br />DE DIGITALIZACIÓN<br />E INTELIGENCIA ARTIFICIAL</GovOffice>
            </GovBanner>
            <Brand><BrandLogo /></Brand>
            <Language>Español <Chevron /></Language>
            <SocialIcons />
          </Header>

          <NavBar>
            {NAV.map((n) => (
              <NavItem key={n.label} $w={n.w} $active={n.active} $padLeft={n.pad}>
                {n.label} <Chevron />
              </NavItem>
            ))}
            <NavIcon $w={84} $lift={0}>
              <svg width="33" height="33" viewBox="0 0 33 33" fill="none" stroke="#6e6e6e">
                <circle cx="13" cy="13" r="11.5" strokeWidth="2.3" /><path d="M21.500 21.500l3 3" strokeWidth="2.5" /><path d="M22.500 23l8 8" strokeWidth="5" />
              </svg>
            </NavIcon>
            <NavIcon $w={256} $lift={2}>
              <svg width="36" height="34" viewBox="0 0 36 34">
                <path d="M8 32A17.300 17.300 0 1128 32L27 26c-.7-5-4-8-9-8s-8.300 3-9 8z" fill="#6e6e6e" />
                <ellipse cx="18" cy="9.5" rx="6.5" ry="6.8" fill="#fff" />
              </svg>
            </NavIcon>
            <NavRest />
          </NavBar>

          <SubNav>
            <SubItem $w={573} $active>CONJUNTOS DE DATOS</SubItem>
            <SubItem $w={539}>ACCESO NSIP</SubItem>
            <SubItem $w={67}>API</SubItem>
            <SubItem $w={598}>PUNTO SPARQL</SubItem>
          </SubNav>

          <Crumbs>
            Inicio<CrumbBar />Catálogo de datos<CrumbBar />Conjuntos de datos<CrumbBar />
            <CrumbCurrent>Playas gallegas con...</CrumbCurrent>
          </Crumbs>

          <Formats>
            {FORMATS.map((f) => <FormatIcon key={f.name} {...f} />)}
          </Formats>

          <Title>Playas gallegas con bandera azul en 2023</Title>

          <TopicBar>
            <Topic $w={218} $pad={25}><TopicDisc><Hiker /></TopicDisc><TopicName>Cultura y ocio</TopicName></Topic>
            <Topic $w={221} $pad={10}><TopicDisc><Mountains /></TopicDisc><TopicName>Medio ambiente</TopicName></Topic>
            <Topic $w={305} $pad={11}><TopicDisc><CityMap /></TopicDisc><TopicName>Urbanismo e infraestructuras</TopicName></Topic>
            <Share><ShareIcon /><span>Compartir</span><Chevron color="#777" /></Share>
          </TopicBar>

          <Meta>
            <MetaRow $h={42}>
              <MetaLabel $up={10}>Publicador</MetaLabel>
              <MetaValue $link $w={151} $down={2}>Xunta de Galicia</MetaValue>
              <Pill $w={110}>Público</Pill>
            </MetaRow>
            <MetaRow $h={42}>
              <MetaLabel>Nivel de administración</MetaLabel>
              <MetaValue $up={2}>Administración Autonómica</MetaValue>
            </MetaRow>
            <MetaRow $h={26}>
              <MetaLabel $w={243}>Licencia</MetaLabel>
              <MetaValue $link>http://creativecommons.org/licenses/by/3.0/es/deed.gl</MetaValue>
            </MetaRow>
          </Meta>

          <Heading $top={38}>Descripción</Heading>
          <Paragraph>
            <span>Relación y localización de los 113 arenales gallegos con distinción de bandera azul en 2023. Los ficheros csv.ods y xlsx contienen las referencias del nombre de la playa, el lugar, la parroquia, el municipio y la provincia en los que se encuentra, el tipo de playa (resguardada o abierta) y el</span>
            <span>tipo de arena que presenta (fina, gruesa o cantos rodados), así como su longitud en metros, las coordenadas de geolocalización y la página web donde obtener más información del arenal. A partir de esta última referencia web se puede ampliar la información con la que proporciona la</span>
            <span>Agencia Turismo de Galicia en su portal o ver imágenes de la playa en cuestión.</span>
          </Paragraph>

          <Heading $top={40}>Distribuciones</Heading>
          <Files>
            {FILES.map((f) => (
              <FileRow key={f.title}>
                <FileIcon label={f.icon} />
                <span>{f.title}</span>
                <FileCell>{f.format}</FileCell>
                <FileCell>{f.size}</FileCell>
                <FileAction><Pill $w={130}><DownloadIcon />Descargar</Pill></FileAction>
              </FileRow>
            ))}
          </Files>

          <Heading $top={46}>Información adicional</Heading>
          <DateLine>12/05/2023 - 0:00 (UTC+02:00)</DateLine>
        </Page>
        <ScrollTrack>
          <svg width="10" height="6" viewBox="0 0 10 6"><path d="M0 6 5 0l5 6z" fill="#8b8b8b" /></svg>
          <ScrollThumb />
          <svg width="10" height="6" viewBox="0 0 10 6"><path d="M0 0l5 6 5-6z" fill="#8b8b8b" /></svg>
        </ScrollTrack>
      </Viewport>

      <HomeBehind>
        <svg width="22" height="24" viewBox="0 0 22 24"><path d="M3 1h3v4l4-4 11 10-2 2-9-8-8 8-2-2 3-3zM4 12l6-6 8 7v11h-5v-7H9v7H4z" fill="#7b7b7b" /></svg>
      </HomeBehind>
      <Access>
        <AccessText><AccessWord $ls={0.55}>HERRAMIENTAS DE</AccessWord><AccessWord $ls={0.15}>ACCESIBILIDAD</AccessWord></AccessText>
        <svg width="60" height="52" viewBox="-6 -7 60 52"><AccessIcon /></svg>
        <AccessArrow />
      </Access>
      <Status>https://avancedigital.mineco.gob.es/es-es/Paginas/index.aspx</Status>
    </Window>
  );
}
